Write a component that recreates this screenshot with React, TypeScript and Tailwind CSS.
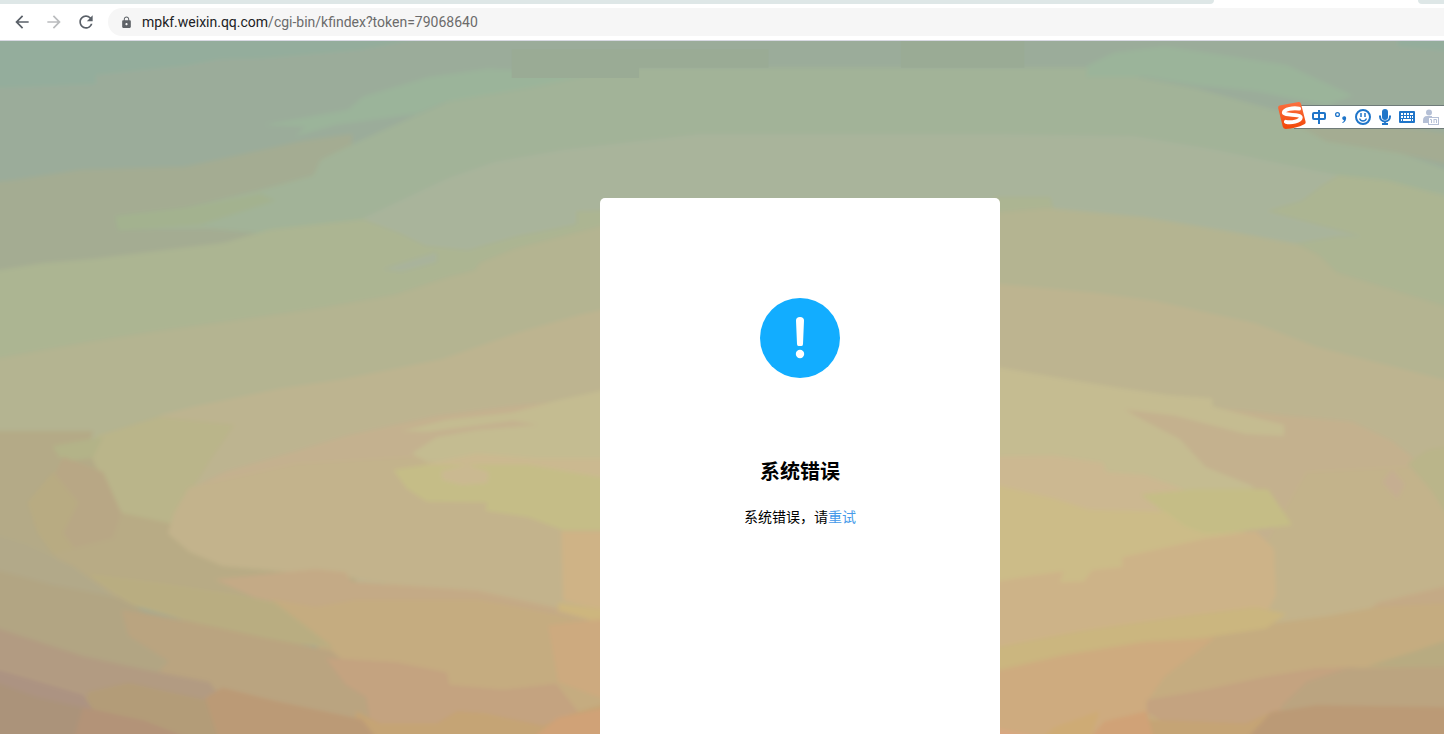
import React from 'react';
import { MdArrowBack, MdArrowForward, MdLock, MdRefresh } from 'react-icons/md';

const bands = [
  // sky, left side
  { fill: '#94ad9c', d: 'M0 41H470L405 50L363 58L268 66L225 67L192 73L103 82V91L0 95Z' },
  { fill: '#a4ac92', d: 'M0 187L22 185L88 175L191 172L306 147L356 140L356 190L280 255L120 270L0 285Z' },
  { fill: '#a2b398', d: 'M122 220L191 212L260 196L318 180L325 165L356 150L421 121L470 100L520 80L600 75H1000L1083 75L1190 95L1290 122L1340 140L1444 176V210L1300 215L1200 240H300L214 232L125 233Z' },
  { fill: '#9bb49a', d: 'M268 131L352 116L367 103L432 84L490 76L600 80L540 93L450 108L421 120L340 131L300 142L310 133Z' },
  { fill: '#9bb49a', d: 'M1083 73L1110 60L1160 54L1220 63L1280 72L1346 102L1320 112L1250 98L1190 92L1140 84L1083 84Z' },
  { fill: '#a3b28f', d: 'M122 220L191 212L265 198L280 205L205 229L125 234Z' },
  { fill: '#a4ac92', d: 'M1280 125L1360 128L1444 140V170L1390 158L1320 147Z' },
  { fill: '#a9b49b', d: 'M367 222L451 183L497 167L566 155L700 140H1000L1130 142L1210 155L1310 176L1444 200V260L1300 270H1000L600 270H400Z' },
  { fill: '#94ad9c', d: 'M1390 41H1444V60L1390 54Z' },
  { fill: '#acb592', d: 'M0 274L50 266L100 262L230 246L275 233L367 223L402 236L429 249L471 253L517 240L578 228V215L610 214V420H0Z' },
  { fill: '#a9b39b', d: 'M386 272L440 255V265L405 274Z' },
  { fill: '#acb592', d: 'M990 201H1047L1050 215L1200 240L1280 248L1330 240H1355L1260 215L1295 205L1315 190L1332 180L1380 185L1444 202V420H990Z' },
  // middle of the picture
  { fill: '#b4b491', d: 'M0 360L50 351L96 343L160 333L268 318L330 309L398 297L450 280L478 273L482 266L517 252L610 228V500H0Z' },
  { fill: '#b4b491', d: 'M990 217L1045 212L1140 221L1230 236L1290 247L1312 258L1330 275L1444 310V500H990Z' },
  { fill: '#bdb490', d: 'M165 415L200 406L283 389L344 380L400 369L445 360L520 334L580 317L610 310V620H190Z' },
  { fill: '#bdb490', d: 'M990 286L1090 295L1150 303L1250 325L1310 348L1444 382V600H990Z' },
  { fill: '#bab58a', d: 'M104 435L165 416L240 424L215 460L190 500L175 560L90 500Z' },
  { fill: '#b4aa87', d: 'M0 430H100L95 448L120 500L112 550L0 575Z' },
  { fill: '#b3b388', d: 'M60 445L110 436L100 456L70 460Z' },
  { fill: '#b8a785', d: 'M70 455L110 470L128 510V540L70 550L40 520Z' },
  { fill: '#b8ab82', d: 'M35 500L60 470L85 500L70 530L85 550L60 550L45 530Z' },
  { fill: '#b8ab85', d: 'M60 550L120 535L128 510L175 520L205 540L360 560V610L200 618L100 590Z' },
  { fill: '#b2a989', d: 'M0 530L35 541L80 562L105 580L125 595L0 566Z' },
  { fill: '#c4b18f', d: 'M190 490L230 470L300 450L350 435L440 415L520 405L610 396V480H300Z' },
  { fill: '#c3b38c', d: 'M180 510L195 485L300 462L420 455L610 470V640L540 610L460 590L352 573L228 562L195 548L174 530Z' },
  { fill: '#c4bc91', d: 'M405 430L450 419L515 412L560 400L610 389V460H430L415 452L440 436L480 429L540 424L515 420L430 431Z' },
  { fill: '#cbb990', d: 'M430 462L480 452L540 457H610V480L430 470Z' },
  { fill: '#c5bd87', d: 'M397 468L430 463H530L610 477V527H565L530 514L488 508L490 500L430 499L410 486Z' },
  { fill: '#cab991', d: 'M444 469L470 463L492 470L490 481L465 483L445 478Z' },
  // lower left strokes
  { fill: '#c4aa86', d: 'M220 575L320 565L350 568L355 577L480 586L610 614V640L320 606L260 593Z' },
  { fill: '#c5ac80', d: 'M275 594L320 602L360 595H480L520 602L610 620V734H360L340 690L318 630Z' },
  { fill: '#cfb386', d: 'M563 528H610V606L565 596Z' },
  { fill: '#cdb67e', d: 'M560 598L610 605V620L560 606Z' },
  { fill: '#cdaa7f', d: 'M550 620L610 613V694L560 675Z' },
  { fill: '#b9ad81', d: 'M95 570L160 578L240 590L280 598L308 619L338 642L265 634L200 617L140 600Z' },
  { fill: '#b2a583', d: 'M0 565L60 580L125 593L150 606L200 618L260 670L240 734H0Z' },
  { fill: '#baa480', d: 'M128 605L195 616L270 632L335 644L365 670L385 734H230V692L165 665L175 655L135 630Z' },
  { fill: '#c4a380', d: 'M330 652L400 656L450 666L452 678L505 683L558 677L580 705L545 719L485 705L440 716H375L370 690L350 678Z' },
  { fill: '#c5a475', d: 'M360 704L384 716H440L460 704L487 706L545 718L575 706L610 696V734H360Z' },
  { fill: '#d0a277', d: 'M530 734L560 710L610 700V734Z' },
  { fill: '#b29b82', d: 'M0 621L90 650L150 663L215 675L226 690L215 734H0Z' },
  { fill: '#b39c78', d: 'M95 685L135 676L212 693L225 700L230 734H150L90 710Z' },
  { fill: '#bb9a76', d: 'M211 691L228 681L280 694L366 712L383 734H225Z' },
  { fill: '#ac9382', d: 'M0 662L35 672L90 688L100 703L60 710L0 690Z' },
  { fill: '#ab937a', d: 'M0 674L45 690L90 700L100 734H0Z' },
  { fill: '#b39378', d: 'M90 700L150 713L205 734H80Z' },
  // lower right strokes
  { fill: '#c4b18e', d: 'M1100 395L1280 415L1345 421L1385 440L1410 460L1430 500V640H1100Z' },
  { fill: '#c3b38b', d: 'M1300 470L1400 465L1425 490L1444 520V610L1350 630L1240 630L1260 540Z' },
  { fill: '#c5ae91', d: 'M1375 480L1385 467L1397 482L1390 497Z' },
  { fill: '#bab58a', d: 'M1400 462L1420 448L1444 444V520L1425 490Z' },
  { fill: '#c5bc91', d: 'M990 367L1060 379L1115 388L1165 395L1207 398V406L1278 424V435L1240 433L1170 415L1120 409L1140 420L1175 438L1200 465L1250 485L1220 495H990Z' },
  { fill: '#ccb891', d: 'M990 455L1050 454L1099 461L1102 470L1140 473L1184 489L1220 520H990Z' },
  { fill: '#c5bd86', d: 'M1136 492L1190 487H1262L1286 522L1250 526L1190 532Z' },
  { fill: '#ccbc88', d: 'M990 482L1050 496L1085 507L1161 509L1180 523L1200 530L1240 528V560L1000 590H990Z' },
  { fill: '#cdb388', d: 'M990 578L1055 566L1085 563L1120 553L1200 535L1250 528L1268 545L1270 590L1255 620L990 650Z' },
  { fill: '#ccbc88', d: 'M990 550L1155 538L1118 553V563L1088 566L1080 577L1056 578L1060 567L990 577Z' },
  { fill: '#c4aa86', d: 'M1370 598L1444 580V640H1320Z' },
  { fill: '#c5ac80', d: 'M1140 650L1180 632L1260 619L1320 611L1370 602L1444 598V734H1110Z' },
  { fill: '#cbb67f', d: 'M990 642L1080 625L1170 612L1250 602L1280 609L1260 623L1160 638L1050 655L990 665Z' },
  { fill: '#ceab7f', d: 'M990 665L1060 649L1140 636L1210 632L1160 670L1142 695V734H990Z' },
  { fill: '#b8ab81', d: 'M1360 660L1408 645L1444 633V662Z' },
  { fill: '#c4a380', d: 'M1142 693L1200 683L1260 670L1310 662L1350 661L1330 680L1280 705L1250 718L1160 715L1142 705Z' },
  { fill: '#bba480', d: 'M1275 699L1300 675L1340 662L1444 660V705L1275 704Z' },
  { fill: '#c5a475', d: 'M1140 712L1240 716L1272 702L1250 734H1140Z' },
  { fill: '#bb9a76', d: 'M1238 734L1265 705L1310 698L1444 700V734Z' },
  { fill: '#ceab74', d: 'M1035 734L1050 720L1095 704L1085 734Z' },
  { fill: '#d0a277', d: 'M1083 734L1100 714L1142 704L1150 734Z' },
  { fill: '#d9a781', d: 'M990 720L1025 727L1036 734H990Z' },
];

// Bleeds 8px past every side so the soft brush edges stay out of view
const Wallpaper = () => (
  <svg
    className="absolute -inset-2 h-[calc(100%+16px)] w-[calc(100%+16px)]"
    viewBox="0 41 1444 693"
    preserveAspectRatio="none"
    aria-hidden="true"
  >
    <defs>
      <filter id="brush" x="0" y="0" width="1" height="1">
        <feGaussianBlur stdDeviation="2" />
      </filter>
    </defs>
    <g filter="url(#brush)">
      <rect x="0" y="41" width="1444" height="693" fill="#9bac9a" />
      {bands.map((band, index) => (
        <path key={index} fill={band.fill} d={band.d} />
      ))}
    </g>
    <path fill="#9aab95" d="M514 57H768V75H640V85H514ZM899 41H1021V75H899Z" />
  </svg>
);

const AddressBar = () => (
  <header className="relative shrink-0 border-b border-[#d8d9e2] bg-white">
    <div className="flex h-1 justify-between">
      <div className="w-[1214px] rounded-br-sm bg-[#dee7e7]" />
      <div className="w-[26px] rounded-bl-sm bg-[#dee7e7]" />
    </div>
    <div className="flex h-9 items-center pl-3">
      <div className="flex gap-3 text-[#5a6068]">
        <button type="button" aria-label="后退">
          <MdArrowBack size={20} />
        </button>
        <button type="button" aria-label="前进" className="text-[#babcbe]">
          <MdArrowForward size={20} />
        </button>
        <button type="button" aria-label="重新加载">
          <MdRefresh size={20} />
        </button>
      </div>
      <div className="ml-3 flex h-7 flex-1 items-center rounded-l-full bg-[#f6f6f6] pl-3">
        <MdLock size={13} className="text-[#5f6368]" />
        <a
          href="#"
          className="ml-[9px] font-[Roboto,'Noto_Sans_CJK_SC',sans-serif] text-sm text-[#6b6b6b]"
        >
          <span className="text-[#202124]">mpkf.weixin.qq.com</span>/cgi-bin/kfindex?token=79068640
        </a>
      </div>
    </div>
  </header>
);

const InputToolbar = () => (
  <div className="absolute top-[60px] right-0 flex items-end">
    <svg className="z-10 -mr-3" width="28" height="28" viewBox="0 0 28 28" aria-hidden="true">
      <defs>
        <linearGradient id="sogou" x1="0" y1="0" x2="0" y2="1">
          <stop offset="0" stopColor="#fb7041" />
          <stop offset="1" stopColor="#f24708" />
        </linearGradient>
      </defs>
      <path
        fill="url(#sogou)"
        d="M1.5 4.6L20.5 1.1Q22.6.8 23.1 2.9L27.6 20.7Q28 22.5 26.3 23.3Q18 27.6 7.5 28Q5.3 28 4.7 25.6L.2 7.3Q-.2 5.1 1.5 4.6Z"
      />
      <path
        fill="none"
        stroke="#fff"
        strokeWidth="3.8"
        strokeLinecap="round"
        strokeLinejoin="round"
        d="M21.2 7.6C15 6.6 6.5 8 5.8 11.3C5.3 15.2 22.8 12.5 22.8 16.5C22.4 20.5 13 22 7.8 20.8"
      />
    </svg>
    <div className="flex h-6 items-center gap-1 border-y border-[#6f7b78] bg-white pr-1 pl-4 text-[#1f75c9]">
      <button type="button" aria-label="中文输入">
        <svg width="18" height="18" viewBox="0 0 18 18" fill="none" stroke="currentColor" strokeWidth="2">
          <rect x="3" y="5" width="12" height="6" rx="1" />
          <path d="M9 2V16" />
        </svg>
      </button>
      <button type="button" aria-label="中文标点">
        <svg width="18" height="18" viewBox="0 0 18 18" fill="currentColor">
          <circle cx="5.5" cy="6.5" r="1.9" fill="none" stroke="currentColor" strokeWidth="1.3" />
          <path d="M10.2 10.3A2 2 0 1 1 14 11C13.7 13 12.4 14.4 10.6 15L10.2 14.3C11.3 13.7 11.9 13 12 12.2A2 2 0 0 1 10.2 10.3Z" />
        </svg>
      </button>
      <button type="button" aria-label="表情">
        <svg width="18" height="18" viewBox="0 0 18 18" fill="none" stroke="currentColor" strokeWidth="2">
          <circle cx="9" cy="9" r="7" />
          <path d="M7 5V9M11 5V9" strokeWidth="1.5" />
          <path d="M5.5 10.5Q6.5 13 9 13T12.5 10.5" strokeWidth="1.3" />
        </svg>
      </button>
      <button type="button" aria-label="语音输入">
        <svg width="18" height="18" viewBox="0 0 18 18" fill="none" stroke="currentColor" strokeWidth="2">
          <rect x="6" y="1" width="6" height="11" rx="3" fill="currentColor" stroke="none" />
          <path d="M4 7.5V8.5A5 5 0 0 0 14 8.5V7.5M9 13V16M6 16H12" />
        </svg>
      </button>
      <button type="button" aria-label="软键盘">
        <svg width="18" height="18" viewBox="0 0 18 18" fill="currentColor">
          <rect x="1" y="3" width="16" height="12" rx="1" />
          <path
            fill="#fff"
            d="M3 5H5V7H3ZM6 5H8V7H6ZM9 5H11V7H9ZM12 5H15V7H12ZM3 8H5V10H3ZM6 8H8V10H6ZM9 8H11V10H9ZM12 8H13V10H12ZM14 8H15V10H14ZM3 11H4V13H3ZM5 11H13V13H5ZM14 11H15V13H14Z"
          />
        </svg>
      </button>
      <button type="button" aria-label="个人中心" className="ml-0.5 text-[#b5c0d6]">
        <svg width="18" height="18" viewBox="0 0 18 18" fill="currentColor">
          <circle cx="7" cy="4.5" r="3" />
          <path d="M1 15V12.5Q1 8 5 8H10V15Z" />
          <rect x="6.5" y="9.5" width="10" height="7" fill="#fff" stroke="currentColor" />
          <path d="M8 11.5H9.5V15M12 11.5H14.5V15M12 11V15" fill="none" stroke="currentColor" />
        </svg>
      </button>
    </div>
  </div>
);

const ErrorCard = () => (
  <section className="flex w-[400px] flex-col items-center rounded-t-[5px] bg-white pt-[100px] text-black">
    <svg width="80" height="80" viewBox="0 0 80 80" aria-hidden="true">
      <circle cx="40" cy="40" r="40" fill="#12adff" />
      <path fill="#fff" d="M36 22.5Q36 19 40 19T44 22.5L43 46Q43 48 41.5 48H38.5Q37 48 37 46Z" />
      <circle cx="40" cy="56" r="4.2" fill="#fff" />
    </svg>
    <h1 className="mt-[78px] text-xl leading-[30px] font-bold">系统错误</h1>
    <p className="mt-5 text-sm leading-5">
      系统错误，请
      <a href="#" className="text-[#459ae9]">重试</a>
    </p>
  </section>
);

const App = () => {
  return (
    <div className="flex min-h-screen flex-col font-['Noto_Sans_CJK_SC',sans-serif]">
      <AddressBar />
      <main className="relative flex flex-1 overflow-hidden">
        <Wallpaper />
        <div className="relative flex flex-1 justify-center pt-[157px] pl-[156px]">
          <ErrorCard />
        </div>
        <InputToolbar />
      </main>
    </div>
  );
};

export default App;
